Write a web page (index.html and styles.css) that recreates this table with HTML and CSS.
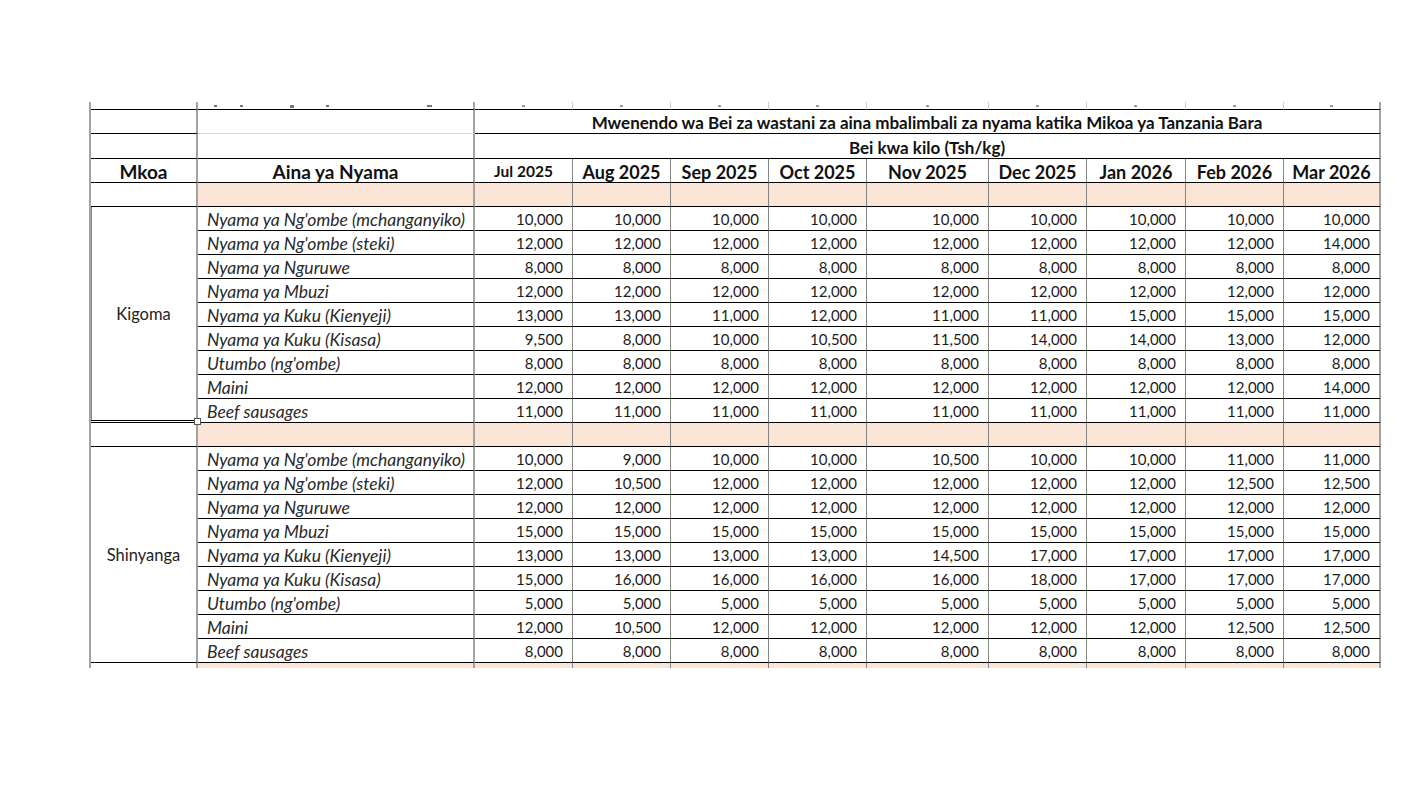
FILE: index.html
```html
<!DOCTYPE html>
<html lang="sw">
<head>
<meta charset="utf-8">
<title>Mwenendo wa Bei za Nyama</title>
<link rel="stylesheet" href="styles.css">
</head>
<body>
<div class="sheet">
  <!-- clipped row above -->
  <div class="c stub s1"></div>
  <div class="c stub s2"><i class="frag f1"></i><i class="frag f2"></i><i class="frag f3"></i><i class="frag f4"></i><i class="frag f5"></i></div>
  <div class="c stub m"><i class="frag fm"></i></div>
  <div class="c stub m"><i class="frag fm"></i></div>
  <div class="c stub m"><i class="frag fm"></i></div>
  <div class="c stub m"><i class="frag fm"></i></div>
  <div class="c stub m"><i class="frag fm"></i></div>
  <div class="c stub m"><i class="frag fm"></i></div>
  <div class="c stub m"><i class="frag fm"></i></div>
  <div class="c stub m"><i class="frag fm"></i></div>
  <div class="c stub m last"><i class="frag fm"></i></div>

  <!-- header row 1 -->
  <div class="c k1"></div>
  <div class="c k2 faint"></div>
  <div class="c title span9 last">Mwenendo wa Bei za wastani za aina mbalimbali za nyama katika Mikoa ya Tanzania Bara</div>
  <!-- header row 2 -->
  <div class="c k1"></div>
  <div class="c k2"></div>
  <div class="c sub span9 last">Bei kwa kilo (Tsh/kg)</div>
  <!-- header row 3 -->
  <div class="c k1 hd">Mkoa</div>
  <div class="c k2 hd">Aina ya Nyama</div>
  <div class="c m mh small">Jul 2025</div>
  <div class="c m mh">Aug 2025</div>
  <div class="c m mh">Sep 2025</div>
  <div class="c m mh">Oct 2025</div>
  <div class="c m mh">Nov 2025</div>
  <div class="c m mh">Dec 2025</div>
  <div class="c m mh">Jan 2026</div>
  <div class="c m mh">Feb 2026</div>
  <div class="c m mh last">Mar 2026</div>
  <!-- header row 4 (peach spacer) -->
  <div class="c k1"></div>
  <div class="c k2 pe"></div>
  <div class="c m pe"></div><div class="c m pe"></div><div class="c m pe"></div><div class="c m pe"></div><div class="c m pe"></div><div class="c m pe"></div><div class="c m pe"></div><div class="c m pe"></div><div class="c m pe last"></div>

  <!-- Kigoma -->
  <div class="c k1 region sel">Kigoma<span class="handle"></span></div>
  <div class="c k2 n">Nyama ya Ng'ombe (mchanganyiko)</div>
  <div class="c m v">10,000</div><div class="c m v">10,000</div><div class="c m v">10,000</div><div class="c m v">10,000</div><div class="c m v">10,000</div><div class="c m v">10,000</div><div class="c m v">10,000</div><div class="c m v">10,000</div><div class="c m v last">10,000</div>
  <div class="c k2 n">Nyama ya Ng'ombe (steki)</div>
  <div class="c m v">12,000</div><div class="c m v">12,000</div><div class="c m v">12,000</div><div class="c m v">12,000</div><div class="c m v">12,000</div><div class="c m v">12,000</div><div class="c m v">12,000</div><div class="c m v">12,000</div><div class="c m v last">14,000</div>
  <div class="c k2 n">Nyama ya Nguruwe</div>
  <div class="c m v">8,000</div><div class="c m v">8,000</div><div class="c m v">8,000</div><div class="c m v">8,000</div><div class="c m v">8,000</div><div class="c m v">8,000</div><div class="c m v">8,000</div><div class="c m v">8,000</div><div class="c m v last">8,000</div>
  <div class="c k2 n">Nyama ya Mbuzi</div>
  <div class="c m v">12,000</div><div class="c m v">12,000</div><div class="c m v">12,000</div><div class="c m v">12,000</div><div class="c m v">12,000</div><div class="c m v">12,000</div><div class="c m v">12,000</div><div class="c m v">12,000</div><div class="c m v last">12,000</div>
  <div class="c k2 n">Nyama ya Kuku (Kienyeji)</div>
  <div class="c m v">13,000</div><div class="c m v">13,000</div><div class="c m v">11,000</div><div class="c m v">12,000</div><div class="c m v">11,000</div><div class="c m v">11,000</div><div class="c m v">15,000</div><div class="c m v">15,000</div><div class="c m v last">15,000</div>
  <div class="c k2 n">Nyama ya Kuku (Kisasa)</div>
  <div class="c m v">9,500</div><div class="c m v">8,000</div><div class="c m v">10,000</div><div class="c m v">10,500</div><div class="c m v">11,500</div><div class="c m v">14,000</div><div class="c m v">14,000</div><div class="c m v">13,000</div><div class="c m v last">12,000</div>
  <div class="c k2 n">Utumbo (ng'ombe)</div>
  <div class="c m v">8,000</div><div class="c m v">8,000</div><div class="c m v">8,000</div><div class="c m v">8,000</div><div class="c m v">8,000</div><div class="c m v">8,000</div><div class="c m v">8,000</div><div class="c m v">8,000</div><div class="c m v last">8,000</div>
  <div class="c k2 n">Maini</div>
  <div class="c m v">12,000</div><div class="c m v">12,000</div><div class="c m v">12,000</div><div class="c m v">12,000</div><div class="c m v">12,000</div><div class="c m v">12,000</div><div class="c m v">12,000</div><div class="c m v">12,000</div><div class="c m v last">14,000</div>
  <div class="c k2 n">Beef sausages</div>
  <div class="c m v">11,000</div><div class="c m v">11,000</div><div class="c m v">11,000</div><div class="c m v">11,000</div><div class="c m v">11,000</div><div class="c m v">11,000</div><div class="c m v">11,000</div><div class="c m v">11,000</div><div class="c m v last">11,000</div>

  <!-- spacer -->
  <div class="c k1"></div>
  <div class="c k2 pe"></div>
  <div class="c m pe"></div><div class="c m pe"></div><div class="c m pe"></div><div class="c m pe"></div><div class="c m pe"></div><div class="c m pe"></div><div class="c m pe"></div><div class="c m pe"></div><div class="c m pe last"></div>

  <!-- Shinyanga -->
  <div class="c k1 region">Shinyanga</div>
  <div class="c k2 n">Nyama ya Ng'ombe (mchanganyiko)</div>
  <div class="c m v">10,000</div><div class="c m v">9,000</div><div class="c m v">10,000</div><div class="c m v">10,000</div><div class="c m v">10,500</div><div class="c m v">10,000</div><div class="c m v">10,000</div><div class="c m v">11,000</div><div class="c m v last">11,000</div>
  <div class="c k2 n">Nyama ya Ng'ombe (steki)</div>
  <div class="c m v">12,000</div><div class="c m v">10,500</div><div class="c m v">12,000</div><div class="c m v">12,000</div><div class="c m v">12,000</div><div class="c m v">12,000</div><div class="c m v">12,000</div><div class="c m v">12,500</div><div class="c m v last">12,500</div>
  <div class="c k2 n">Nyama ya Nguruwe</div>
  <div class="c m v">12,000</div><div class="c m v">12,000</div><div class="c m v">12,000</div><div class="c m v">12,000</div><div class="c m v">12,000</div><div class="c m v">12,000</div><div class="c m v">12,000</div><div class="c m v">12,000</div><div class="c m v last">12,000</div>
  <div class="c k2 n">Nyama ya Mbuzi</div>
  <div class="c m v">15,000</div><div class="c m v">15,000</div><div class="c m v">15,000</div><div class="c m v">15,000</div><div class="c m v">15,000</div><div class="c m v">15,000</div><div class="c m v">15,000</div><div class="c m v">15,000</div><div class="c m v last">15,000</div>
  <div class="c k2 n">Nyama ya Kuku (Kienyeji)</div>
  <div class="c m v">13,000</div><div class="c m v">13,000</div><div class="c m v">13,000</div><div class="c m v">13,000</div><div class="c m v">14,500</div><div class="c m v">17,000</div><div class="c m v">17,000</div><div class="c m v">17,000</div><div class="c m v last">17,000</div>
  <div class="c k2 n">Nyama ya Kuku (Kisasa)</div>
  <div class="c m v">15,000</div><div class="c m v">16,000</div><div class="c m v">16,000</div><div class="c m v">16,000</div><div class="c m v">16,000</div><div class="c m v">18,000</div><div class="c m v">17,000</div><div class="c m v">17,000</div><div class="c m v last">17,000</div>
  <div class="c k2 n">Utumbo (ng'ombe)</div>
  <div class="c m v">5,000</div><div class="c m v">5,000</div><div class="c m v">5,000</div><div class="c m v">5,000</div><div class="c m v">5,000</div><div class="c m v">5,000</div><div class="c m v">5,000</div><div class="c m v">5,000</div><div class="c m v last">5,000</div>
  <div class="c k2 n">Maini</div>
  <div class="c m v">12,000</div><div class="c m v">10,500</div><div class="c m v">12,000</div><div class="c m v">12,000</div><div class="c m v">12,000</div><div class="c m v">12,000</div><div class="c m v">12,000</div><div class="c m v">12,500</div><div class="c m v last">12,500</div>
  <div class="c k2 n">Beef sausages</div>
  <div class="c m v">8,000</div><div class="c m v">8,000</div><div class="c m v">8,000</div><div class="c m v">8,000</div><div class="c m v">8,000</div><div class="c m v">8,000</div><div class="c m v">8,000</div><div class="c m v">8,000</div><div class="c m v last">8,000</div>

  <!-- clipped row below -->
  <div class="c k1 tail"></div>
  <div class="c k2 pe tail"></div>
  <div class="c m pe tail"></div><div class="c m pe tail"></div><div class="c m pe tail"></div><div class="c m pe tail"></div><div class="c m pe tail"></div><div class="c m pe tail"></div><div class="c m pe tail"></div><div class="c m pe tail"></div><div class="c m pe tail last"></div>
</div>
</body>
</html>
```

FILE: styles.css
```css
* { box-sizing: border-box; }

html, body {
  margin: 0;
  padding: 0;
  background: #ffffff;
}

body {
  font-family: Lato, "Open Sans", "Liberation Sans", sans-serif;
  color: #1c1c1c;
  padding-top: 102px;
  padding-left: 89px;
}

.sheet {
  display: grid;
  width: max-content;
  grid-template-columns: 107px 277px 98px 98px 98px 98px 122px 98px 99px 98px 97px;
  grid-template-rows: 8px 24px 25px 24px 24px repeat(9, 24px) 24px repeat(9, 24px) 5px;
  border-left: 2px solid #a3a3a3;
}

.c {
  display: flex;
  align-items: center;
  border-bottom: 1px solid #000;
  border-right: 1px solid #858585;
  font-size: 15px;
  line-height: 1;
  white-space: nowrap;
  overflow: hidden;
}

.k1, .k2, .last {
  border-right: 2px solid #a3a3a3;
}

.stub {
  position: relative;
  border-right-color: #cfcfcf;
  overflow: visible;
}
.stub.s1, .stub.s2 { border-right: 2px solid #a3a3a3; }
.stub.last { border-right: 2px solid #a3a3a3; }

.frag {
  position: absolute;
  bottom: 2px;
  height: 2px;
  background: #777;
}
.f1 { left: 16px; width: 3px; }
.f2 { left: 42px; width: 3px; }
.f3 { left: 92px; width: 4px; bottom: 1px; height: 3px; }
.f4 { left: 128px; width: 3px; }
.f5 { left: 229px; width: 5px; }
.fm { left: 50%; width: 3px; margin-left: -2px; background: #999; }

.faint { border-bottom-color: #d6d6d6; }

.span9 { grid-column: span 9; }

.title, .sub {
  justify-content: center;
  font-weight: 700;
  font-size: 17px;
  padding-top: 2px;
  color: #111;
}

.hd {
  justify-content: center;
  font-weight: 700;
  font-size: 19px;
  padding-top: 2px;
  color: #111;
}

.mh {
  justify-content: center;
  font-weight: 700;
  font-size: 18px;
  padding-top: 2px;
  color: #111;
}
.mh.small { font-size: 15.5px; }

.pe { background: #fbe5d6; }

.region {
  grid-row: span 9;
  justify-content: center;
  font-size: 16.5px;
  padding-top: 2px;
  color: #222;
  position: relative;
  overflow: visible;
}

.sel {
  border-bottom: 3px double #000;
  box-shadow: inset 1px 0 0 #8a8a8a;
}

.handle {
  position: absolute;
  right: -5px;
  bottom: -5px;
  width: 7px;
  height: 7px;
  background: #fff;
  border: 1px solid #555;
  z-index: 2;
}

.n {
  font-style: italic;
  font-size: 17.5px;
  padding-left: 9px;
  padding-top: 2px;
  color: #2a2a2a;
}

.v {
  justify-content: flex-end;
  padding-right: 9px;
  padding-top: 2px;
  color: #1c1c1c;
}

.tail { border-bottom: none; }
```
